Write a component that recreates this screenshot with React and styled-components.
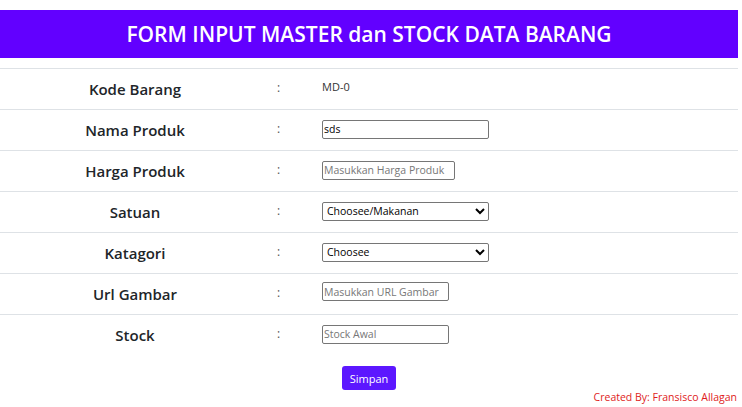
import React from "react";
import styled, { createGlobalStyle } from "styled-components";

const GlobalStyle = createGlobalStyle`
  body {
    margin: 0;
    background: #fff;
    font-family: "Open Sans", "Noto Sans", sans-serif;
    color: #212529;
  }
`;

const Page = styled.div`
  width: 738px;
  padding-top: 10px;
`;

const Header = styled.h1`
  margin: 0;
  height: 48px;
  background: #6200ff;
  color: #fff;
  font-size: 21px;
  font-weight: 600;
  display: flex;
  align-items: center;
  justify-content: center;
  letter-spacing: 0;
`;

const Table = styled.div`
  margin-top: 10px;
`;

const Row = styled.div`
  box-sizing: border-box;
  display: grid;
  grid-template-columns: 270px 52px 1fr;
  align-items: center;
  height: 41px;
  border-top: 1px solid #dee2e6;
`;

const Label = styled.div`
  text-align: center;
  font-size: 15px;
  font-weight: 600;
  color: #212529;
`;

const Colon = styled.div`
  font-size: 12px;
  color: #555;
  padding-left: 7px;
  margin-top: -4px;
`;

const Value = styled.div`
  font-size: 11px;
  color: #333;
  margin-top: -6px;
`;

const Input = styled.input`
  display: block;
  box-sizing: border-box;
  width: ${p => p.w}px;
  height: 19px;
  padding: 0 1px;
  border: 1px solid #767676;
  border-radius: 2px;
  font-family: "Open Sans", sans-serif;
  font-size: 10.5px;
  font-weight: 400;
  color: #000;
  margin-top: ${p => (p.off ? p.off : -2)}px;
  &::placeholder {
    color: #777;
  }
`;

const Select = styled.select`
  display: block;
  box-sizing: border-box;
  width: 167px;
  height: 19px;
  padding: 0;
  margin-top: -2px;
  border: 1px solid #767676;
  border-radius: 2px;
  font-family: "Open Sans", sans-serif;
  font-size: 10.5px;
  font-weight: 400;
  color: #000;
  background: #fff;
`;

const Actions = styled.div`
  display: flex;
  justify-content: center;
  padding-top: 11px;
`;

const Button = styled.button`
  width: 54px;
  height: 24px;
  border: none;
  border-radius: 3px;
  background: #5c17ff;
  color: #fff;
  font-family: "Open Sans", sans-serif;
  font-size: 11px;
`;

const Footer = styled.div`
  text-align: right;
  font-size: 10.5px;
  line-height: 13px;
  color: #e01b1b;
  margin-top: 1px;
  padding-right: 1px;
`;

const rows = [
  { label: "Kode Barang", value: "MD-0" },
  { label: "Nama Produk", input: { w: 167, val: "sds" } },
  { label: "Harga Produk", input: { w: 133, ph: "Masukkan Harga Produk" } },
  { label: "Satuan", select: "Choosee/Makanan" },
  { label: "Katagori", select: "Choosee" },
  { label: "Url Gambar", input: { w: 127, ph: "Masukkan URL Gambar", off: -5 } },
  { label: "Stock", input: { w: 127, ph: "Stock Awal" } },
];

export default function App() {
  return (
    <Page>
      <GlobalStyle />
      <Header>FORM INPUT MASTER dan STOCK DATA BARANG</Header>
      <Table>
        {rows.map(r => (
          <Row key={r.label}>
            <Label>{r.label}</Label>
            <Colon>:</Colon>
            <div>
              {r.value && <Value>{r.value}</Value>}
              {r.input && (
                <Input
                  w={r.input.w}
                  off={r.input.off}
                  defaultValue={r.input.val}
                  placeholder={r.input.ph}
                />
              )}
              {r.select && (
                <Select defaultValue={r.select}>
                  <option>{r.select}</option>
                </Select>
              )}
            </div>
          </Row>
        ))}
      </Table>
      <Actions>
        <Button>Simpan</Button>
      </Actions>
      <Footer>Created By: Fransisco Allagan</Footer>
    </Page>
  );
}
